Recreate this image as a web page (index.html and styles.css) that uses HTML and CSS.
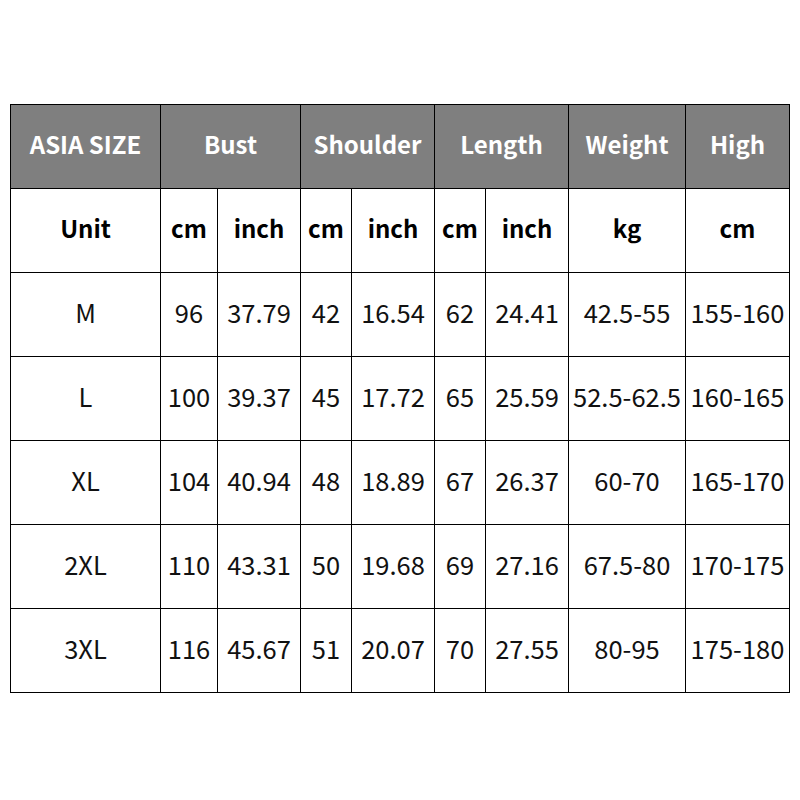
FILE: index.html
```html
<!DOCTYPE html>
<html>
<head>
<meta charset="utf-8">
<link rel="stylesheet" href="styles.css">
</head>
<body>
<div class="chart">
  <div class="cell head">ASIA SIZE</div>
  <div class="cell head span2">Bust</div>
  <div class="cell head span2">Shoulder</div>
  <div class="cell head span2">Length</div>
  <div class="cell head">Weight</div>
  <div class="cell head">High</div>

  <div class="cell unit">Unit</div>
  <div class="cell unit">cm</div>
  <div class="cell unit">inch</div>
  <div class="cell unit">cm</div>
  <div class="cell unit">inch</div>
  <div class="cell unit">cm</div>
  <div class="cell unit">inch</div>
  <div class="cell unit">kg</div>
  <div class="cell unit">cm</div>

  <div class="cell">M</div><div class="cell">96</div><div class="cell">37.79</div><div class="cell">42</div><div class="cell">16.54</div><div class="cell">62</div><div class="cell">24.41</div><div class="cell">42.5-55</div><div class="cell">155-160</div>

  <div class="cell">L</div><div class="cell">100</div><div class="cell">39.37</div><div class="cell">45</div><div class="cell">17.72</div><div class="cell">65</div><div class="cell">25.59</div><div class="cell">52.5-62.5</div><div class="cell">160-165</div>

  <div class="cell">XL</div><div class="cell">104</div><div class="cell">40.94</div><div class="cell">48</div><div class="cell">18.89</div><div class="cell">67</div><div class="cell">26.37</div><div class="cell">60-70</div><div class="cell">165-170</div>

  <div class="cell">2XL</div><div class="cell">110</div><div class="cell">43.31</div><div class="cell">50</div><div class="cell">19.68</div><div class="cell">69</div><div class="cell">27.16</div><div class="cell">67.5-80</div><div class="cell">170-175</div>

  <div class="cell">3XL</div><div class="cell">116</div><div class="cell">45.67</div><div class="cell">51</div><div class="cell">20.07</div><div class="cell">70</div><div class="cell">27.55</div><div class="cell">80-95</div><div class="cell">175-180</div>
</div>
</body>
</html>
```
FILE: styles.css
```css
html, body {
  margin: 0;
  padding: 0;
  background: #ffffff;
}
body {
  font-family: "Noto Sans CJK SC", "Noto Sans", sans-serif;
}
.chart {
  margin: 104px 0 0 10px;
  width: 780px;
  box-sizing: border-box;
  display: grid;
  grid-template-columns: 149px 56px 82px 50px 82px 50px 82px 116px 103px;
  grid-auto-rows: 83px;
  gap: 1px;
  padding: 1px;
  background: #000000;
}
.cell {
  background: #ffffff;
  color: #111111;
  display: flex;
  align-items: center;
  justify-content: center;
  font-size: 25.5px;
  line-height: 1;
  padding-bottom: 6px;
  box-sizing: border-box;
  font-weight: 400;
  white-space: nowrap;
  letter-spacing: 0;
}
.head {
  background: #7f7f7f;
  color: #ffffff;
  font-size: 24px;
  font-weight: 700;
}
.unit {
  font-size: 24px;
  font-weight: 700;
  color: #000000;
}
.span2 {
  grid-column: span 2;
}
```
